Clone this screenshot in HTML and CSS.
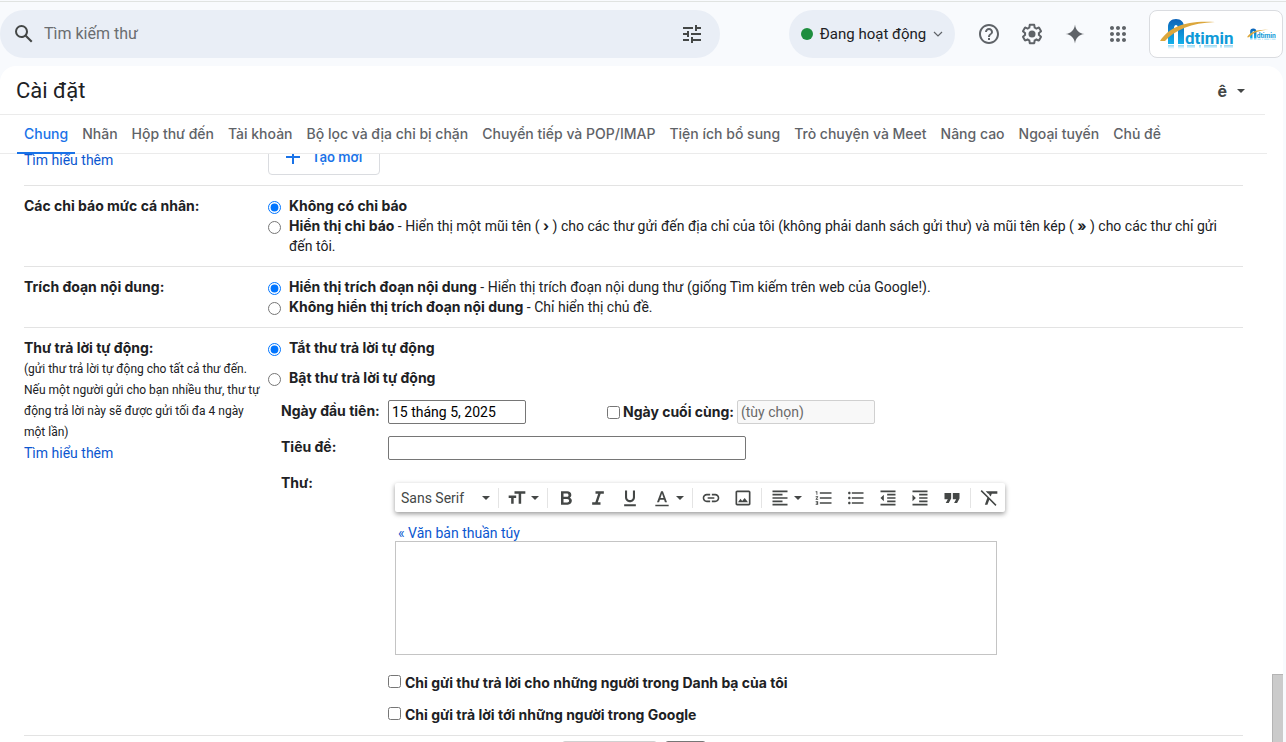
FILE: index.html
```html
<!DOCTYPE html>
<html lang="vi">
<head>
    <meta charset="UTF-8">
    <meta name="viewport" content="width=device-width, initial-scale=1.0">
    <title>Cài đặt</title>
    <link rel="stylesheet" href="styles.css">
</head>
<body>

<header class="topbar">
    <form class="search" role="search">
        <button type="button" class="icon-btn" aria-label="Tìm kiếm">
            <svg width="24" height="24" viewBox="0 0 24 24"><path d="M20.49 19l-5.73-5.73C15.53 12.2 16 10.91 16 9.5A6.5 6.5 0 1 0 9.5 16c1.41 0 2.7-.47 3.77-1.24L19 20.49 20.49 19zM5 9.5C5 7.01 7.01 5 9.5 5S14 7.01 14 9.5 11.99 14 9.5 14 5 11.99 5 9.5z"/></svg>
        </button>
        <input type="text" placeholder="Tìm kiếm thư" aria-label="Tìm kiếm thư">
        <button type="button" class="icon-btn" aria-label="Bộ lọc">
            <svg width="24" height="24" viewBox="0 0 24 24"><path d="M3 17v2h6v-2H3zM3 5v2h10V5H3zm10 16v-2h8v-2h-8v-2h-2v6h2zM7 9v2H3v2h4v2h2V9H7zm14 4v-2H11v2h10zm-6-4h2V7h4V5h-4V3h-2v6z"/></svg>
        </button>
    </form>

    <div class="topbar-right">
        <button type="button" class="status">
            <span class="dot"></span>
            Đang hoạt động
            <svg width="10" height="10" viewBox="0 0 10 10"><path d="M1 3l4 4 4-4" fill="none" stroke="#5f6368" stroke-width="1.2"/></svg>
        </button>
        <nav class="tools">
            <button type="button" class="icon-btn" aria-label="Hỗ trợ">
                <svg width="24" height="24" viewBox="0 0 24 24"><path d="M11 18h2v-2h-2v2zm1-16C6.48 2 2 6.48 2 12s4.48 10 10 10 10-4.48 10-10S17.52 2 12 2zm0 18c-4.41 0-8-3.59-8-8s3.59-8 8-8 8 3.59 8 8-3.59 8-8 8zm0-14c-2.21 0-4 1.79-4 4h2c0-1.1.9-2 2-2s2 .9 2 2c0 2-3 1.75-3 5h2c0-2.25 3-2.5 3-5 0-2.21-1.79-4-4-4z"/></svg>
            </button>
            <button type="button" class="icon-btn" aria-label="Cài đặt">
                <svg width="24" height="24" viewBox="0 0 24 24"><path d="M13.85 22.25h-3.7c-.74 0-1.36-.54-1.45-1.27l-.27-1.89c-.27-.14-.53-.29-.79-.46l-1.8.72c-.7.26-1.47-.03-1.81-.65L2.2 15.53c-.35-.66-.2-1.44.36-1.88l1.53-1.19c-.01-.15-.02-.3-.02-.46 0-.15.01-.31.02-.46l-1.52-1.19c-.59-.45-.74-1.26-.37-1.88l1.85-3.19c.34-.62 1.11-.9 1.79-.63l1.81.73c.26-.17.52-.32.78-.46l.27-1.91c.09-.7.71-1.25 1.44-1.25h3.7c.74 0 1.36.54 1.45 1.27l.27 1.89c.27.14.53.29.79.46l1.8-.72c.71-.26 1.48.03 1.82.65l1.84 3.18c.36.66.2 1.44-.36 1.88l-1.52 1.19c.01.15.02.3.02.46s-.01.31-.02.46l1.52 1.19c.56.45.72 1.23.37 1.86l-1.86 3.22c-.34.62-1.11.9-1.8.63l-1.8-.72c-.26.17-.52.32-.78.46l-.27 1.91c-.1.68-.72 1.22-1.46 1.22zm-3.23-2h2.76l.37-2.55.53-.22c.44-.18.88-.44 1.34-.78l.45-.34 2.38.96 1.38-2.4-2.03-1.58.07-.56c.03-.26.06-.51.06-.78s-.03-.53-.06-.78l-.07-.56 2.03-1.58-1.39-2.4-2.39.96-.45-.35c-.42-.32-.87-.58-1.33-.77l-.52-.22-.37-2.55h-2.76l-.37 2.55-.53.21c-.44.19-.88.44-1.34.79l-.45.33-2.38-.95-1.39 2.39 2.03 1.58-.07.56a7 7 0 0 0-.06.79c0 .26.02.53.06.78l.07.56-2.03 1.58 1.38 2.4 2.39-.96.45.35c.43.33.86.58 1.33.77l.53.22.38 2.55z"/><circle cx="12" cy="12" r="3.5"/></svg>
            </button>
            <button type="button" class="icon-btn" aria-label="Gemini">
                <svg width="24" height="24" viewBox="0 0 24 24"><path d="M12 2.500c.6 5.400 4 8.900 9.500 9.500-5.500.6-8.900 4.100-9.500 9.500-.6-5.400-4-8.900-9.500-9.500 5.500-.6 8.900-4.100 9.500-9.500z"/></svg>
            </button>
            <button type="button" class="icon-btn" aria-label="Ứng dụng">
                <svg width="24" height="24" viewBox="0 0 24 24"><path d="M6 8c1.100 0 2-.9 2-2s-.9-2-2-2-2 .9-2 2 .9 2 2 2zm6 12c1.100 0 2-.9 2-2s-.9-2-2-2-2 .9-2 2 .9 2 2 2zm-6 0c1.100 0 2-.9 2-2s-.9-2-2-2-2 .9-2 2 .9 2 2 2zm0-6c1.100 0 2-.9 2-2s-.9-2-2-2-2 .9-2 2 .9 2 2 2zm6 0c1.100 0 2-.9 2-2s-.9-2-2-2-2 .9-2 2 .9 2 2 2zm4-8c0 1.100.9 2 2 2s2-.9 2-2-.9-2-2-2-2 .9-2 2zm-4 2c1.100 0 2-.9 2-2s-.9-2-2-2-2 .9-2 2 .9 2 2 2zm6 6c1.100 0 2-.9 2-2s-.9-2-2-2-2 .9-2 2 .9 2 2 2zm0 6c1.100 0 2-.9 2-2s-.9-2-2-2-2 .9-2 2 .9 2 2 2z"/></svg>
            </button>
        </nav>
        <a href="#" class="account" aria-label="Adtimin">
            <svg width="74" height="32" viewBox="0 0 74 32">
                <defs>
                    <linearGradient id="blue" x1="0" y1="0" x2="0" y2="1">
                        <stop offset="0" stop-color="#0b62b8"/>
                        <stop offset="1" stop-color="#12b0ea"/>
                    </linearGradient>
                    <linearGradient id="fade" x1="0" y1="0" x2="0" y2="1">
                        <stop offset="0" stop-color="#8fd6f3"/>
                        <stop offset="1" stop-color="#ffffff"/>
                    </linearGradient>
                </defs>
                <g id="brand">
                    <path d="M8 26V9c0-5 3-8 8-8s8 3 8 8v17h-6V10c0-2-1-3-2-3s-2 1-2 3v16z" fill="url(#blue)"/>
                    <path d="M8 27h6v4H8zm10 0h6v4h-6zm9 0h8v3h-8zm12 0h2v3h-2zm5 0h13v3H44zm16 0h2v3h-2zm4 0h9v3h-9z" fill="url(#fade)"/>
                    <path d="M0 23C9 9 26 2 55 4 31 5 15 12 5 23z" fill="#dca73c"/>
                    <text x="25" y="26" class="brand-text">dtimin</text>
                </g>
            </svg>
            <svg width="29" height="13" viewBox="0 0 74 32"><use href="#brand"/></svg>
        </a>
    </div>
</header>

<main class="panel">
    <div class="panel-head">
        <h1>Cài đặt</h1>
        <button type="button" class="input-tool" aria-label="Công cụ nhập liệu">
            <span>ê</span>
            <svg class="caret" width="8" height="4" viewBox="0 0 8 4"><path d="M0 0h8L4 4z"/></svg>
        </button>
    </div>

    <nav class="tabs">
        <a href="#" class="active">Chung</a>
        <a href="#">Nhãn</a>
        <a href="#">Hộp thư đến</a>
        <a href="#">Tài khoản</a>
        <a href="#">Bộ lọc và địa chỉ bị chặn</a>
        <a href="#">Chuyển tiếp và POP/IMAP</a>
        <a href="#">Tiện ích bổ sung</a>
        <a href="#">Trò chuyện và Meet</a>
        <a href="#">Nâng cao</a>
        <a href="#">Ngoại tuyến</a>
        <a href="#">Chủ đề</a>
    </nav>

    <div class="pane">
        <div class="settings">
            <!-- Signature row, scrolled partly under the tabs -->
            <section class="row row-signature">
                <div class="name"><a href="#">Tìm hiểu thêm</a></div>
                <div class="value">
                    <button type="button" class="create">
                        <svg width="14" height="14" viewBox="0 0 14 14"><path d="M6 0h2v6h6v2H8v6H6V8H0V6h6z"/></svg>
                        Tạo mới
                    </button>
                </div>
            </section>

            <section class="row">
                <div class="name"><b>Các chỉ báo mức cá nhân:</b></div>
                <div class="value">
                    <label class="option"><input type="radio" name="indicator" checked><span><b>Không có chỉ báo</b></span></label>
                    <label class="option"><input type="radio" name="indicator"><span><b>Hiển thị chỉ báo</b> - Hiển thị một mũi tên ( <b>›</b> ) cho các thư gửi đến địa chỉ của tôi (không phải danh sách gửi thư) và mũi tên kép ( <b>»</b> ) cho các thư chỉ gửi đến tôi.</span></label>
                </div>
            </section>

            <section class="row">
                <div class="name"><b>Trích đoạn nội dung:</b></div>
                <div class="value">
                    <label class="option"><input type="radio" name="snippet" checked><span><b>Hiển thị trích đoạn nội dung</b> - Hiển thị trích đoạn nội dung thư (giống Tìm kiếm trên web của Google!).</span></label>
                    <label class="option"><input type="radio" name="snippet"><span><b>Không hiển thị trích đoạn nội dung</b> - Chỉ hiển thị chủ đề.</span></label>
                </div>
            </section>

            <section class="row">
                <div class="name">
                    <b>Thư trả lời tự động:</b>
                    <p>(gửi thư trả lời tự động cho tất cả thư đến. Nếu một người gửi cho bạn nhiều thư, thư tự động trả lời này sẽ được gửi tối đa 4 ngày một lần)</p>
                    <a href="#">Tìm hiểu thêm</a>
                </div>
                <div class="value">
                    <div class="responder">
                        <label class="option"><input type="radio" name="vacation" checked><span><b>Tắt thư trả lời tự động</b></span></label>
                        <label class="option"><input type="radio" name="vacation"><span><b>Bật thư trả lời tự động</b></span></label>
                    </div>

                    <div class="fields">
                        <label for="first-day">Ngày đầu tiên:</label>
                        <div class="dates">
                            <input type="text" id="first-day" class="date" value="15 tháng 5, 2025">
                            <div class="last-day">
                                <input type="checkbox" id="has-end">
                                <label for="has-end">Ngày cuối cùng:</label>
                                <input type="text" class="date" value="(tùy chọn)" aria-label="Ngày cuối cùng" disabled>
                            </div>
                        </div>

                        <label for="subject">Tiêu đề:</label>
                        <div><input type="text" id="subject" class="subject"></div>

                        <label for="message">Thư:</label>
                        <div class="message">
                            <div class="toolbar">
                                <div class="font-select">
                                    <select aria-label="Phông chữ">
                                        <option>Sans Serif</option>
                                        <option>Serif</option>
                                    </select>
                                    <svg class="caret" width="8" height="4" viewBox="0 0 8 4"><path d="M0 0h8L4 4z"/></svg>
                                </div>
                                <span class="sep"></span>
                                <button type="button" class="menu" aria-label="Kích thước">
                                    <svg width="20" height="20" viewBox="0 0 24 24"><path d="M9 4v3h5v12h3V7h5V4H9zm-7 8h3v7h3v-7h3V9H2v3z"/></svg>
                                    <svg class="caret" width="8" height="4" viewBox="0 0 8 4"><path d="M0 0h8L4 4z"/></svg>
                                </button>
                                <span class="sep"></span>
                                <button type="button" aria-label="In đậm"><svg width="20" height="20" viewBox="0 0 24 24"><path d="M16.500 11.800c1.200-.8 1.900-2 1.900-3.300C18.400 5.500 16.300 4 13.500 4H6v16h8.200c2.700 0 4.800-2 4.800-4.600 0-1.700-1-3-2.500-3.600zM9 6.700h4c1.200 0 2 .8 2 1.900s-.8 1.900-2 1.900H9V6.700zm4.500 10.600H9V13.100h4.500c1.300 0 2.200.9 2.200 2.100s-.9 2.100-2.200 2.100z"/></svg></button>
                                <button type="button" aria-label="In nghiêng"><svg width="20" height="20" viewBox="0 0 24 24"><path d="M9 4v3h3.200l-3.400 10H5v3h10v-3h-3.200l3.400-10H19V4H9z"/></svg></button>
                                <button type="button" aria-label="Gạch dưới"><svg width="20" height="20" viewBox="0 0 24 24"><path d="M12 17c3.300 0 6-2.700 6-6V3h-2.500v8c0 1.900-1.600 3.500-3.500 3.500S8.500 12.900 8.500 11V3H6v8c0 3.300 2.700 6 6 6zm-7 2.500V22h14v-2.500H5z"/></svg></button>
                                <button type="button" class="menu" aria-label="Màu chữ">
                                    <svg width="20" height="20" viewBox="0 0 24 24"><path d="M4 20h16v2H4zM10.900 4L6 17h2.500l1-3h5l1 3H18L13.100 4h-2.200zm-.7 8L12 6.700l1.800 5.300h-3.600z"/></svg>
                                    <svg class="caret" width="8" height="4" viewBox="0 0 8 4"><path d="M0 0h8L4 4z"/></svg>
                                </button>
                                <span class="sep"></span>
                                <button type="button" aria-label="Liên kết"><svg width="20" height="20" viewBox="0 0 24 24"><path d="M3.900 12c0-1.710 1.390-3.100 3.100-3.100h4V7H7c-2.760 0-5 2.240-5 5s2.240 5 5 5h4v-1.900H7c-1.710 0-3.100-1.390-3.100-3.100zM8 13h8v-2H8v2zm9-6h-4v1.900h4c1.710 0 3.100 1.390 3.100 3.100s-1.390 3.100-3.100 3.100h-4V17h4c2.760 0 5-2.240 5-5s-2.240-5-5-5z"/></svg></button>
                                <button type="button" aria-label="Chèn ảnh"><svg width="20" height="20" viewBox="0 0 24 24"><path d="M19 3H5c-1.100 0-2 .9-2 2v14c0 1.100.9 2 2 2h14c1.100 0 2-.9 2-2V5c0-1.100-.9-2-2-2zm0 16H5V5h14v14zM6 17l3-4 2 2.500L14 12l4 5z"/></svg></button>
                                <span class="sep"></span>
                                <button type="button" class="menu" aria-label="Căn lề">
                                    <svg width="20" height="20" viewBox="0 0 24 24"><path d="M15 15H3v2h12v-2zm0-8H3v2h12V7zM3 13h18v-2H3v2zm0 8h18v-2H3v2zM3 3v2h18V3H3z"/></svg>
                                    <svg class="caret" width="8" height="4" viewBox="0 0 8 4"><path d="M0 0h8L4 4z"/></svg>
                                </button>
                                <button type="button" aria-label="Danh sách đánh số"><svg width="20" height="20" viewBox="0 0 24 24"><path d="M2 17h2v.5H3v1h1v.5H2v1h3v-4H2v1zm1-9h1V4H2v1h1v3zm-1 3h1.800L2 13.100v.9h3v-1H3.200L5 10.900V10H2v1zm5-6v2h14V5H7zm0 14h14v-2H7v2zm0-6h14v-2H7v2z"/></svg></button>
                                <button type="button" aria-label="Danh sách dấu đầu dòng"><svg width="20" height="20" viewBox="0 0 24 24"><path d="M4 10.500c-.83 0-1.500.67-1.500 1.500s.67 1.500 1.500 1.500 1.500-.67 1.500-1.500-.67-1.500-1.500-1.500zm0-6c-.83 0-1.500.67-1.500 1.500S3.170 7.500 4 7.500 5.500 6.830 5.500 6 4.830 4.500 4 4.500zm0 12c-.83 0-1.500.68-1.500 1.500s.68 1.500 1.500 1.500 1.500-.68 1.500-1.500-.67-1.500-1.500-1.500zM7 19h14v-2H7v2zm0-6h14v-2H7v2zm0-8v2h14V5H7z"/></svg></button>
                                <button type="button" aria-label="Giảm thụt lề"><svg width="20" height="20" viewBox="0 0 24 24"><path d="M11 17h10v-2H11v2zm-8-5l4 4V8l-4 4zm0 9h18v-2H3v2zM3 3v2h18V3H3zm8 6h10V7H11v2zm0 4h10v-2H11v2z"/></svg></button>
                                <button type="button" aria-label="Tăng thụt lề"><svg width="20" height="20" viewBox="0 0 24 24"><path d="M3 21h18v-2H3v2zM3 8v8l4-4-4-4zm8 9h10v-2H11v2zM3 3v2h18V3H3zm8 6h10V7H11v2zm0 4h10v-2H11v2z"/></svg></button>
                                <button type="button" aria-label="Trích dẫn"><svg width="20" height="20" viewBox="0 0 24 24"><path d="M4.500 18h3.600l2.900-5.500V6H3v7.500h4zM14.500 18h3.600l2.900-5.500V6h-8v7.500h4z"/></svg></button>
                                <span class="sep"></span>
                                <button type="button" aria-label="Xóa định dạng"><svg width="20" height="20" viewBox="0 0 24 24"><path d="M3.270 2.500L2 3.770l8 8L7 20h3.100l2.200-5.900L19.730 21.500 21 20.230 3.270 2.500zM8 4l3 3h1.500l-.4 1.200 2 2L15.300 7H22V4H8z"/></svg></button>
                            </div>
                            <a href="#" class="plain">« Văn bản thuần túy</a>
                            <textarea id="message"></textarea>
                        </div>
                    </div>

                    <div class="limits">
                        <label><input type="checkbox">Chỉ gửi thư trả lời cho những người trong Danh bạ của tôi</label>
                        <label><input type="checkbox">Chỉ gửi trả lời tới những người trong Google</label>
                    </div>
                </div>
            </section>

            <div class="actions">
                <button type="button" class="save" disabled>Lưu thay đổi</button>
                <button type="button" class="cancel">Hủy</button>
            </div>
        </div>
        <div class="track"><div class="thumb"></div></div>
    </div>
</main>

</body>
</html>
```

FILE: styles.css
```css
* {
    box-sizing: border-box;
}

html, body {
    height: 100%;
    margin: 0;
    overflow: hidden; /* only the settings pane scrolls */
}

body {
    display: flex;
    flex-direction: column;
    padding-top: 1px;
    background: #f8fafd;
    color: #202124;
    font-family: Roboto, "Noto Sans", sans-serif;
    font-size: 14px;
    line-height: 20px;
}

button, input, select, textarea {
    font: inherit;
    color: inherit;
    margin: 0;
}

button {
    display: flex;
    align-items: center;
    justify-content: center;
    padding: 0;
    border: none;
    background: none;
    cursor: pointer;
}

svg {
    flex: none;
    fill: currentColor;
}

a {
    color: #0b57d0;
    text-decoration: none;
}

/* Top bar */
.topbar {
    display: flex;
    justify-content: space-between;
    flex: none;
    padding: 8px 3px 8px 0;
    border-top: 1px solid #e0e3e1;
}

.search {
    display: flex;
    align-items: center;
    flex: 0 1 720px;
    height: 48px;
    padding: 0 16px 0 12px;
    border-radius: 24px;
    background: #e9eef6;
}

.search input {
    flex: 1;
    min-width: 0;
    padding: 0 8px;
    border: none;
    background: none;
    font-size: 16px;
}

.search input::placeholder {
    color: #6a6d70;
    opacity: 1;
}

.icon-btn {
    width: 24px;
    height: 24px;
    color: #444746;
}

.topbar-right {
    display: flex;
    align-items: center;
}

.status {
    gap: 7px;
    width: 166px;
    height: 48px;
    border-radius: 24px;
    background: #e9eef6;
    font-size: 15px;
}

.dot {
    width: 12px;
    height: 12px;
    border-radius: 50%;
    background: #1e8e3e;
}

.tools {
    display: flex;
    gap: 19px;
    margin: 0 19px 0 22px;
}

.tools .icon-btn {
    color: #5f6368;
}

.account {
    display: flex;
    align-items: center;
    justify-content: space-between;
    width: 134px;
    height: 48px;
    padding: 0 6px 0 10px;
    border: 1px solid #dadce0;
    border-radius: 8px;
    background: #fff;
}

.brand-text {
    fill: #0e9ad8;
    font-family: Roboto, sans-serif;
    font-size: 17px;
    font-weight: 700;
}

/* Settings panel */
.panel {
    display: flex;
    flex-direction: column;
    flex: 1;
    min-height: 0;
    margin-right: 3px;
    border-radius: 16px 16px 0 0;
    background: #fff;
}

.panel-head {
    display: flex;
    align-items: center;
    justify-content: space-between;
    height: 49px;
    margin-right: 18px;
    padding: 2px 20px 0 16px;
    border-bottom: 1px solid #ebebeb;
}

h1 {
    margin: 0;
    font-size: 22px;
    font-weight: 400;
    line-height: 28px;
}

.input-tool {
    gap: 10px;
    color: #444746;
    font-family: Inter, sans-serif;
    font-size: 16px;
    font-weight: 700;
}

.tabs {
    display: flex;
    height: 39px;
    margin-right: 16px;
    padding-left: 17px;
    border-bottom: 1px solid #ebebeb;
}

.tabs a {
    height: 39px;
    padding: 0 7px;
    color: #5f6368;
    font-family: Inter, sans-serif;
    font-weight: 500;
    line-height: 38px;
    white-space: nowrap;
}

.tabs .active {
    border-bottom: 2px solid #1a73e8;
    color: #1a73e8;
}

.pane {
    display: flex;
    flex: 1;
    min-height: 0;
    overflow: hidden;
}

.settings {
    flex: 1;
    padding: 0 29px 0 24px;
}

.track {
    display: flex;
    flex-direction: column;
    justify-content: flex-end;
    width: 11px;
}

.thumb {
    height: 68px;
    border: solid #b4b4b4;
    border-width: 1px 0 0 1px;
    background: #cbcbcb;
}

.row {
    display: flex;
    padding: 10px 0;
    border-bottom: 1px solid #e3e3e3;
}

.row b {
    font-family: Inter, sans-serif;
    font-weight: 700;
}

.name {
    flex: none;
    width: 244px;
    padding-right: 2px;
}

.name p {
    margin: 0;
    padding-top: 1px;
    font-size: 12px;
    line-height: 21px;
}

.name a {
    display: block;
}

.value {
    flex: 1;
    padding-right: 4px;
}

.row-signature {
    margin-top: -25px;
}

.row-signature .name {
    padding-top: 11px;
}

.create {
    gap: 12px;
    width: 112px;
    height: 36px;
    border: 1px solid #dadce0;
    border-radius: 4px;
    color: #1a73e8;
    font-weight: 500;
}

.option {
    display: flex;
    gap: 8px;
}

input[type="radio"],
input[type="checkbox"] {
    flex: none;
    width: 13px;
    height: 13px;
}

.option input {
    margin-top: 5px;
}

/* Vacation responder */
.responder {
    display: grid;
    gap: 10px;
}

.fields {
    display: grid;
    grid-template-columns: 107px 1fr;
    gap: 12px 0;
    margin: 12px 0 0 13px;
}

.fields label,
.limits label {
    font-family: Inter, sans-serif;
    font-weight: 700;
}

.fields > label {
    padding-top: 1px;
}

.dates,
.last-day {
    display: flex;
    align-items: center;
}

.dates {
    gap: 81px;
}

.last-day {
    gap: 3px;
}

.fields input[type="text"] {
    display: block;
    height: 24px;
    padding: 1px 3px;
    border: 1px solid #767676;
    border-radius: 2px;
    background: #fff;
    color: #000;
}

.fields .date {
    width: 138px;
}

.fields .subject {
    width: 358px;
}

.fields input[type="text"]:disabled {
    border-color: #d0d0d0;
    background: #f8f8f8;
    color: #6a6a6a;
}

.message {
    display: flex;
    flex-direction: column;
    align-items: flex-start;
    padding: 11px 0 0 7px;
}

.toolbar {
    display: flex;
    align-items: center;
    height: 29px;
    border-radius: 2px;
    box-shadow: 0 2px 5px rgba(0, 0, 0, 0.4);
    color: #444746;
}

.toolbar button {
    width: 32px;
    height: 28px;
}

.toolbar .menu {
    justify-content: flex-start;
    gap: 4px;
    width: 44px;
    padding-left: 6px;
}

.font-select {
    position: relative;
    width: 101px;
}

.font-select select {
    width: 100%;
    padding: 0 0 0 6px;
    border: none;
    background: none;
    appearance: none;
}

.font-select .caret {
    position: absolute;
    top: 8px;
    right: 6px;
    pointer-events: none;
}

.sep {
    width: 1px;
    height: 20px;
    margin: 0 2px;
    background: #e4e4e4;
}

.plain {
    margin: 13px 0 0 3px;
    line-height: 16px;
}

.message textarea {
    display: block;
    width: 602px;
    max-width: 100%;
    height: 114px;
    border: 1px solid #c4c4c4;
    resize: none;
}

.limits {
    display: grid;
    gap: 12px;
    margin: 18px 0 0 120px;
}

.limits label {
    display: flex;
    gap: 4px;
}

.limits input {
    margin-top: 2px;
}

.actions {
    display: flex;
    justify-content: center;
    gap: 8px;
    padding-top: 5px;
}

.actions button {
    height: 24px;
    border: 1px solid #767676;
    border-radius: 3px;
    background: #efefef;
}

.actions .save {
    width: 95px;
    border-color: #d0d0d0;
}

.actions .cancel {
    width: 41px;
}
```
